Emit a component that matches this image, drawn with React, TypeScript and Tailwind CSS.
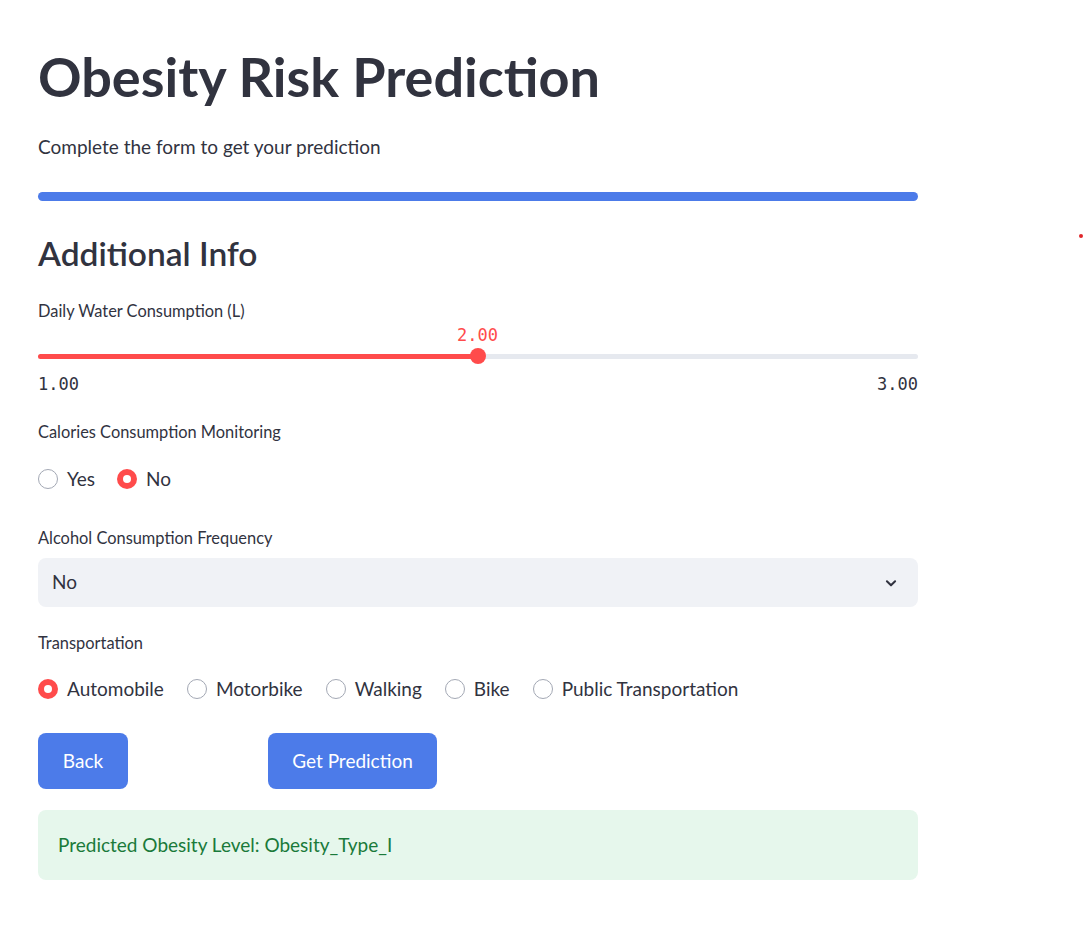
import React from "react";

const font = { fontFamily: "Lato, 'Noto Sans', sans-serif" };
const mono = { fontFamily: "'DejaVu Sans Mono', monospace" };

const Radio = ({ label, checked }: { label: string; checked?: boolean }) => (
  <label className="flex items-center gap-[9px] text-[19px] leading-[24px] text-[#31333f]">
    {checked ? (
      <span className="flex h-[20px] w-[20px] items-center justify-center rounded-full bg-[#ff4b4b]">
        <span className="h-[8px] w-[8px] rounded-full bg-white" />
      </span>
    ) : (
      <span className="h-[20px] w-[20px] rounded-full border border-[#a3a8b4] bg-white" />
    )}
    {label}
  </label>
);

const Label = ({ children }: { children: React.ReactNode }) => (
  <p className="text-[16.4px] leading-[20px] text-[#31333f]">{children}</p>
);

export default function App() {
  return (
    <div className="relative min-h-[925px] w-full bg-white" style={font}>
      <span className="absolute left-[1079px] top-[234px] h-[4px] w-[4px] rounded-full bg-[#e0262a]" />
      <div className="ml-[38px] w-[880px] pt-[45px]">
        <h1 className="text-[54px] font-bold leading-[64px] text-[#31333f]">Obesity Risk Prediction</h1>
        <p className="mt-[25px] text-[19px] leading-[26px] text-[#31333f]">Complete the form to get your prediction</p>

        <div className="mt-[32px] h-[9px] w-full rounded-full bg-[#4c7be9]" />

        <h2 className="mt-[32px] text-[33.5px] font-semibold leading-[40px] text-[#31333f]">Additional Info</h2>

        <div className="mt-[28px]">
          <Label>Daily Water Consumption (L)</Label>
          <div className="relative mt-[4px] h-[44px]">
            <span className="absolute left-[419px] top-0 text-[17px] leading-[20px] text-[#ff4b4b]" style={mono}>
              2.00
            </span>
            <div className="absolute left-0 right-0 top-[29px] h-[5px] rounded-full bg-[#e6e9ef]" />
            <div className="absolute left-0 top-[29px] h-[5px] w-[440px] rounded-full bg-[#ff4b4b]" />
            <div className="absolute left-[432px] top-[23px] h-[16px] w-[16px] rounded-full bg-[#ff4b4b]" />
          </div>
          <div className="mt-[5px] flex justify-between text-[17px] leading-[20px] text-[#31333f]" style={mono}>
            <span>1.00</span>
            <span>3.00</span>
          </div>
        </div>

        <div className="mt-[28px]">
          <Label>Calories Consumption Monitoring</Label>
          <div className="mt-[25px] flex gap-[22px]">
            <Radio label="Yes" />
            <Radio label="No" checked />
          </div>
        </div>

        <div className="mt-[37px]">
          <Label>Alcohol Consumption Frequency</Label>
          <div className="mt-[10px] flex h-[49px] items-center justify-between rounded-[8px] bg-[#f0f2f6] pl-[14px] pr-[20px] text-[19px] text-[#31333f]">
            <span>No</span>
            <svg width="14" height="14" viewBox="0 0 24 24" fill="none" stroke="#31333f" strokeWidth="3.5" strokeLinecap="round" strokeLinejoin="round">
              <path d="M5 9l7 7 7-7" />
            </svg>
          </div>
        </div>

        <div className="mt-[26px]">
          <Label>Transportation</Label>
          <div className="mt-[24px] flex gap-[23px]">
            <Radio label="Automobile" checked />
            <Radio label="Motorbike" />
            <Radio label="Walking" />
            <Radio label="Bike" />
            <Radio label="Public Transportation" />
          </div>
        </div>

        <div className="mt-[32px] flex gap-[140px]">
          <button className="h-[56px] w-[90px] rounded-[8px] bg-[#4c7be9] text-[19px] text-white">Back</button>
          <button className="h-[56px] w-[169px] rounded-[8px] bg-[#4c7be9] text-[19px] text-white">Get Prediction</button>
        </div>

        <div className="mt-[21px] flex h-[70px] items-center rounded-[8px] bg-[#e6f7ec] px-[20px] text-[19px] text-[#1a7a3a]">
          Predicted Obesity Level: Obesity_Type_I
        </div>
      </div>
    </div>
  );
}
